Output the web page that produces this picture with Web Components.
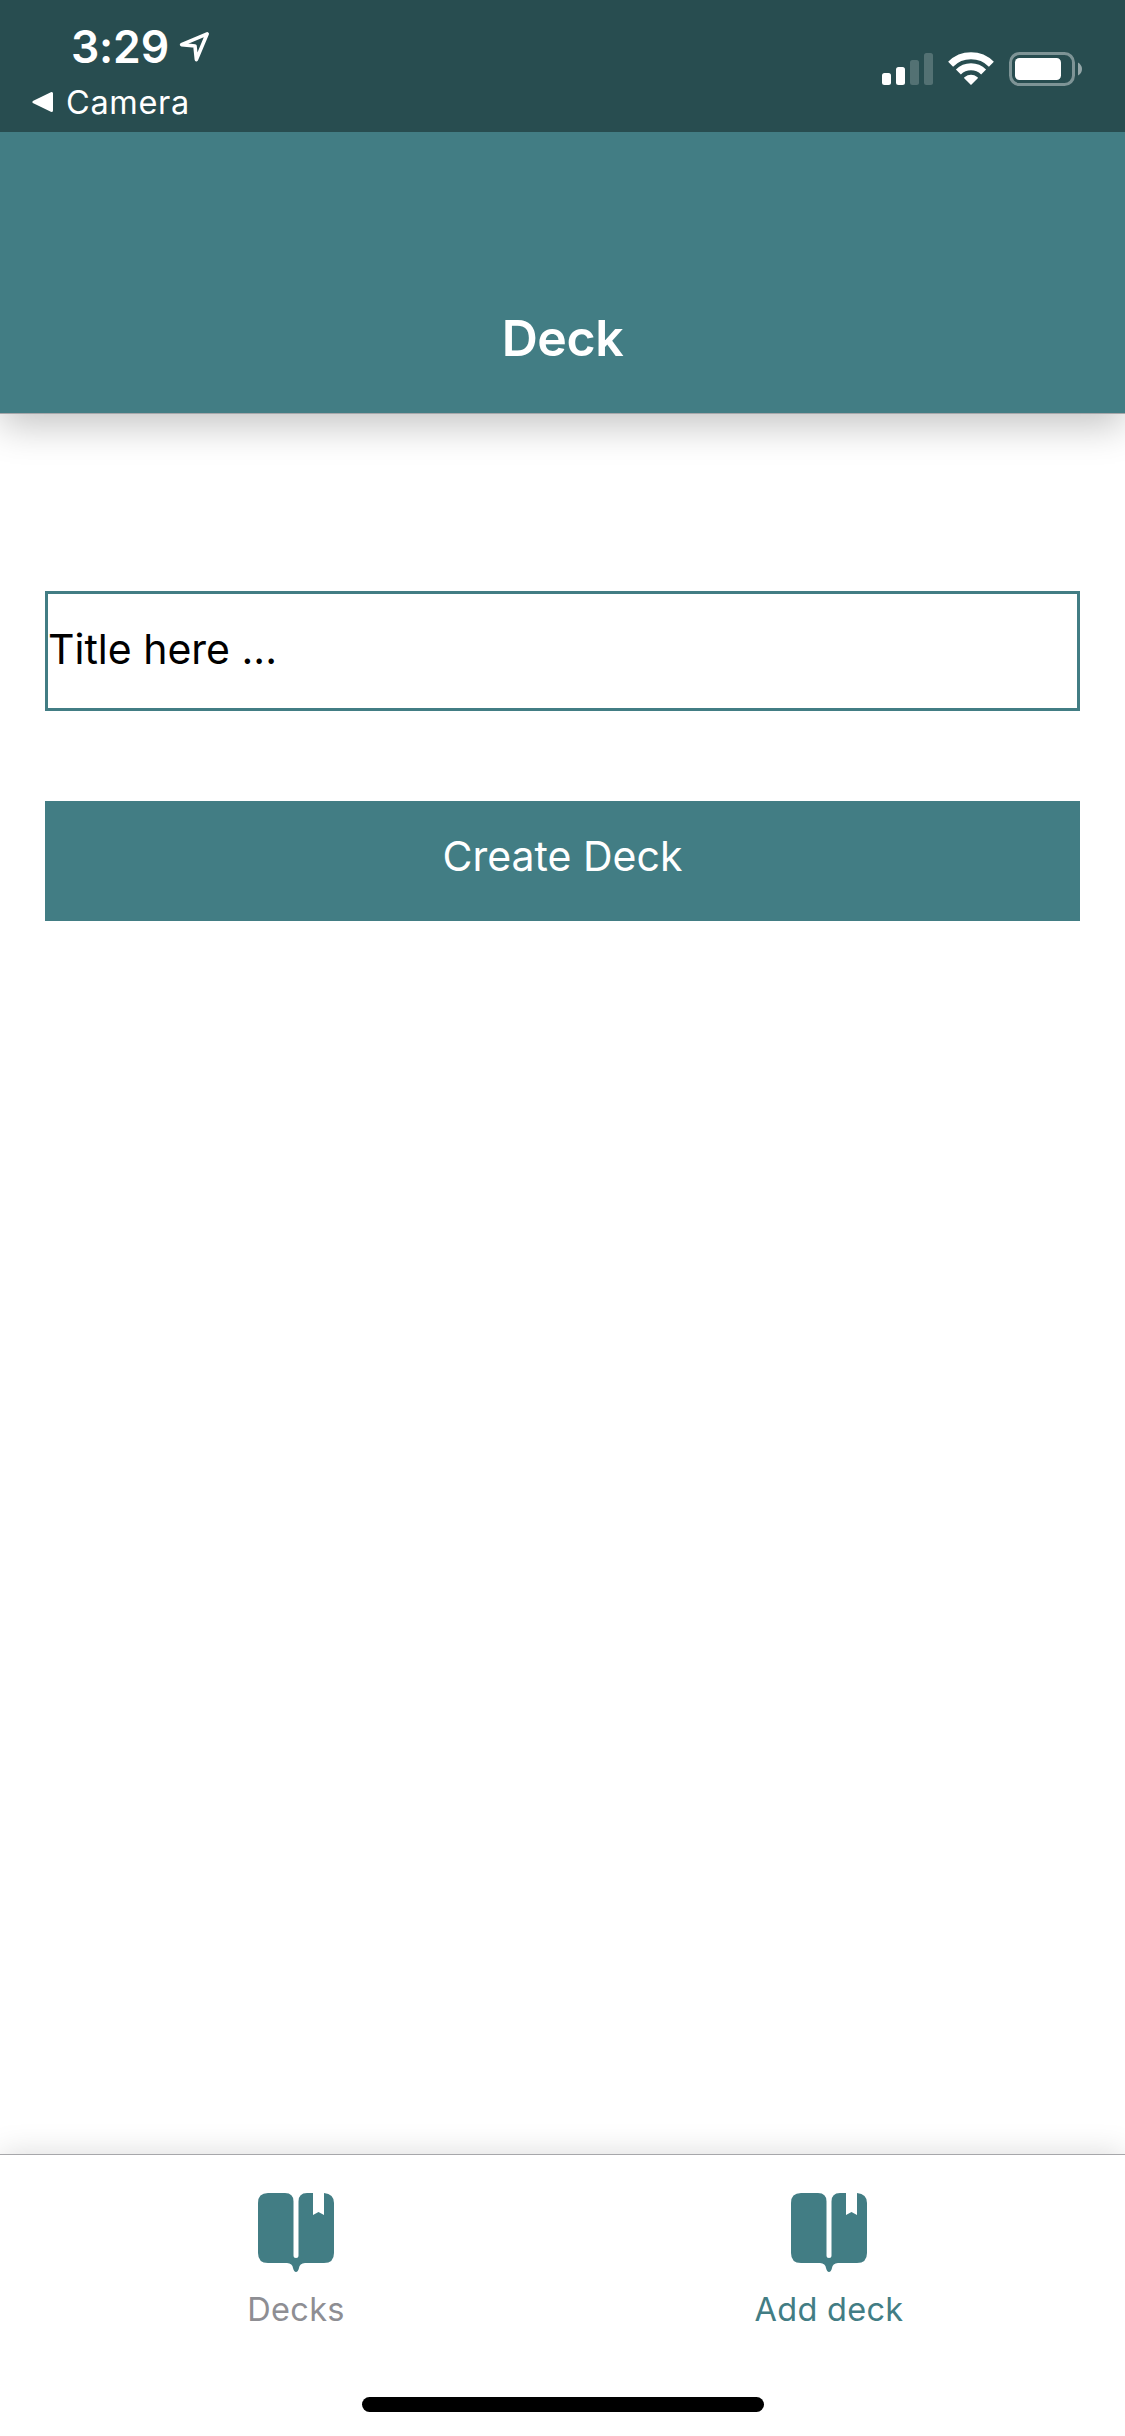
<!DOCTYPE html>
<html lang="en">
<head>
<meta charset="utf-8">
<title>Deck</title>
<style>
html,body{margin:0;height:100%;background:#fff}
body{font-family:Inter,"Liberation Sans",sans-serif;--teal:#427d84}
</style>
</head>
<body>
<deck-app></deck-app>
<script>
const define = (name, html) => customElements.define(name, class extends HTMLElement {
  constructor() {
    super();
    this.attachShadow({ mode: "open" }).innerHTML = html;
  }
});

define("location-icon", `<style>:host{display:block;width:32px;height:34px}svg{display:block}</style>
<svg width="32" height="34" viewBox="178 30 32 34"><path d="M207.2 33.8 181.6 44.6 195 46 196.4 59.6Z" fill="none" stroke="#fff" stroke-width="3.6" stroke-linejoin="round"/></svg>`);

define("signal-icon", `<style>:host{display:block}svg{display:block}</style>
<svg width="51" height="34" viewBox="882 52 51 34" fill="#fff"><rect x="882" y="73" width="9" height="12" rx="2.5"/><rect x="896" y="67" width="9" height="18" rx="2.5"/><g opacity=".2"><rect x="910" y="60" width="9" height="25" rx="2.5"/><rect x="924" y="53" width="9" height="32" rx="2.5"/></g></svg>`);

define("wifi-icon", `<style>:host{display:block}svg{display:block}</style>
<svg width="46" height="34" viewBox="948 52 46 34"><g fill="none" stroke="#fff" stroke-width="7"><path d="M950.6 64.2A28.9 28.9 0 0 1 991.4 64.2"/><path d="M958.4 72A17.8 17.8 0 0 1 983.6 72"/></g><path d="M971 85 964.2 78.2Q963.8 77.6 964.4 77.2 971 72.4 977.6 77.2 978.2 77.6 977.8 78.2Z" fill="#fff"/></svg>`);

define("battery-icon", `<style>:host{display:block}svg{display:block}</style>
<svg width="73" height="34" viewBox="1009 52 73 34"><rect x="1010.5" y="53.5" width="63" height="31" rx="9" fill="none" stroke="#fff" stroke-opacity=".4" stroke-width="3"/><rect x="1015" y="58" width="46" height="22" rx="4.5" fill="#fff"/><path d="M1078 62.5Q1082 65 1082 69T1078 75.5Z" fill="#fff" fill-opacity=".5"/></svg>`);

define("book-icon", `<style>:host{display:block;color:var(--teal)}svg{display:block}</style>
<svg width="76" height="79" viewBox="0 0 76 79" fill="currentColor"><path d="M10 0H27Q35.5 0 35.5 8.500V62.500A2.500 2.500 0 0 0 40.500 62.500V8.500Q40.500 0 49 0H55V22L60.500 19 66 22V0Q76 1 76 10V60Q76 70 66 70H47Q41.500 70.500 41 75 40 79 38 79T35 75Q34.500 70.500 29 70H10Q0 70 0 60V10Q0 0 10 0Z"/></svg>`);

define("status-bar", `<style>
:host{display:flex;justify-content:space-between;height:132px;background:#284d50;color:#fff;box-sizing:border-box;padding-right:43px;z-index:2}
.left{display:flex;flex-direction:column;padding-top:22px}
.time{display:flex;align-items:center;height:50px;padding-left:71px;gap:8px;font-size:44.500px;font-weight:600;line-height:50px}
.time span{width:99px;white-space:nowrap;letter-spacing:-.2px}
.back{display:flex;align-items:center;padding-left:32px;height:40px;margin-top:10px;gap:12px;font-size:32.500px;line-height:40px;letter-spacing:.65px}
.back span{padding-top:1px}
.right{display:flex;height:34px;padding-top:52px}
signal-icon{margin-right:15px}wifi-icon{margin-right:15px}
</style>
<div class="left"><div class="time"><span>3:29</span><location-icon></location-icon></div>
<div class="back"><svg width="22" height="22" viewBox="0 0 22 22"><path d="M2 11 19.500 2.500V19.500Z" fill="#fff" stroke="#fff" stroke-width="3" stroke-linejoin="round"/></svg><span>Camera</span></div></div>
<div class="right"><signal-icon></signal-icon><wifi-icon></wifi-icon><battery-icon></battery-icon></div>`);

define("nav-header", `<style>
:host{display:flex;align-items:flex-end;justify-content:center;height:282px;box-sizing:border-box;padding-bottom:45px;background:var(--teal);border-bottom:1px solid #a7a7aa;color:#fff;font-size:50px;font-weight:600;line-height:60px;box-shadow:0 12px 36px rgba(0,0,0,.23);z-index:1}
span{letter-spacing:-.4px}
</style><span><slot></slot></span>`);

define("title-field", `<style>
:host{display:flex;align-items:center;height:120px;box-sizing:border-box;border:3px solid var(--teal);padding:0 0 5px 0;color:#000;font-size:41px;letter-spacing:0}
</style><span><slot></slot></span>`);

define("submit-button", `<style>
:host{display:block}
button{display:flex;align-items:center;justify-content:center;width:100%;height:120px;box-sizing:border-box;border:0;padding:0 0 10px;margin:0;background:var(--teal);color:#fff;font:400 41px Inter,sans-serif;letter-spacing:0}
</style><button><span><slot></slot></span></button>`);

define("tab-item", `<style>
:host{display:flex;flex:1;flex-direction:column;align-items:center;color:#8e8e93;font-size:32.500px;line-height:40px;letter-spacing:.3px}
:host([active]){color:var(--teal)}
span{margin-top:18px}
</style><book-icon></book-icon><span><slot></slot></span>`);

define("tab-bar", `<style>
:host{display:flex;flex-direction:column;align-items:center;height:282px;box-sizing:border-box;border-top:1px solid #a7a7aa;background:#fff;box-shadow:0 0 30px rgba(0,0,0,.15)}
nav{display:flex;align-self:stretch;height:242px;box-sizing:border-box;padding:38px 29.500px 0}
.home{width:402px;height:15px;border-radius:8px;background:#000}
</style><nav><slot></slot></nav><div class="home"></div>`);

define("deck-app", `<style>
:host{display:flex;flex-direction:column;height:2436px;overflow:hidden}
main{flex:1;display:flex;flex-direction:column;gap:90px;padding:177px 45px 0}
</style>
<status-bar></status-bar>
<nav-header>Deck</nav-header>
<main><title-field>Title here ...</title-field><submit-button>Create Deck</submit-button></main>
<tab-bar><tab-item>Decks</tab-item><tab-item active>Add deck</tab-item></tab-bar>`);
</script>
</body>
</html>
